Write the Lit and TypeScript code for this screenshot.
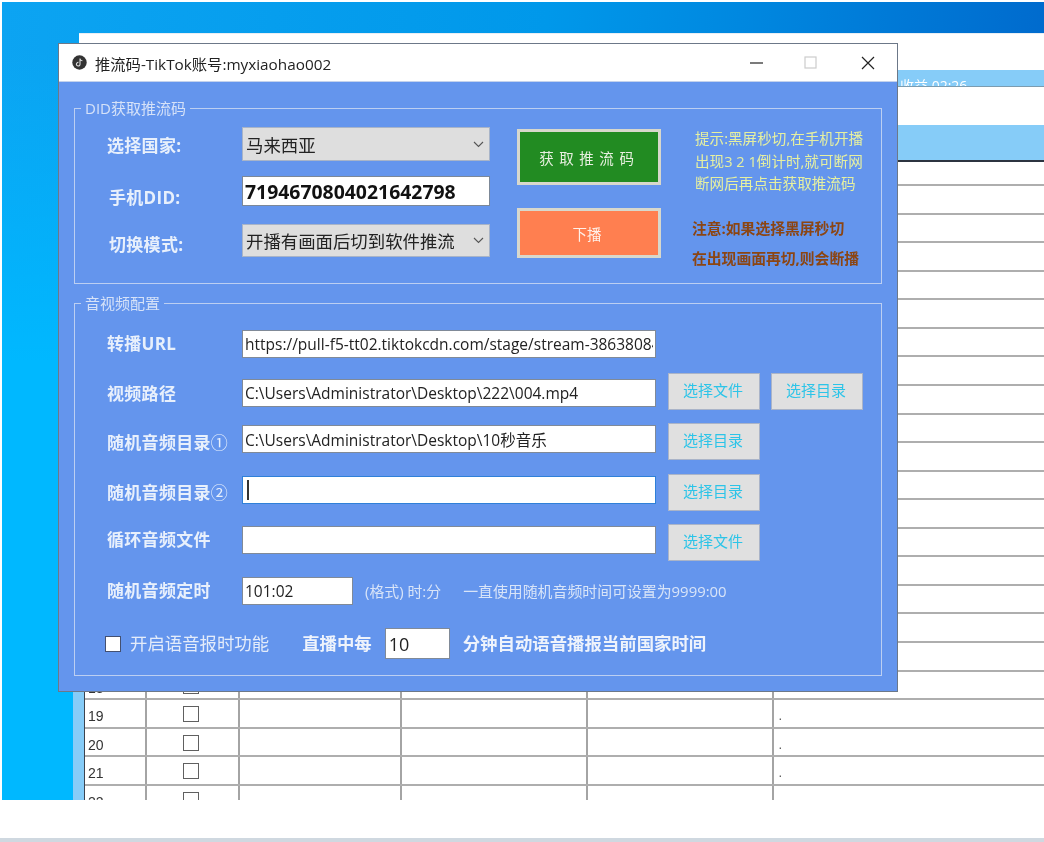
import { LitElement, html, css } from "lit";
import { customElement } from "lit/decorators.js";

const rowNumbers = Array.from({ length: 23 }, (_, i) => i + 1);

@customElement("app-root")
export class AppRoot extends LitElement {
  static styles = css`
    :host { display: block; width: 1044px; height: 842px; background: #fff; overflow: hidden; font-family: "Open Sans", "Noto Sans CJK SC", sans-serif; }
    .stage { height: 842px; display: flex; flex-direction: column; filter: blur(0.6px); background: #fff; padding-top: 2px; box-sizing: border-box; }
    .desktop { position: relative; margin-left: 2px; height: 798px; flex: none; overflow: hidden; background: linear-gradient(180deg, rgba(0,184,255,0) 6%, #00b8ff 45%) 0 0 / 90px 100% no-repeat, linear-gradient(97deg, #0ca4f2 0%, #0098ea 48%, #0088e0 65%, #0062c8 100%); }
    .foot { margin-top: 38px; height: 4px; background: #cfd8e0; flex: none; }

    .backwin { position: absolute; left: 77px; top: 31px; right: 0; bottom: 0; background: #fff; border-top: 1px solid #e8eef4; display: flex; flex-direction: column; }
    .band1 { margin-top: 36px; height: 17px; background: #86ccf8; border-bottom: 1px solid #7c9cb0; overflow: hidden; padding-left: 821px; color: #fff; font-size: 14px; line-height: 31px; flex: none; box-sizing: border-box; }
    .band2 { margin-top: 38px; height: 35px; background: #86ccf8; border-bottom: 2px solid #2c3440; flex: none; box-sizing: content-box; }
    .rows { margin-left: 5px; border-left: 1.5px solid #3c4450; }
    .row { display: grid; grid-template-columns: 61.5px 93px 162px 186px 186px 1fr; height: 28.57px; box-sizing: border-box; border-bottom: 2px solid #aeaeae; }
    .row.first { height: 24px; }
    .cell { border-right: 2px solid #a4a4a4; box-sizing: border-box; position: relative; overflow: hidden; }
    .cell:last-child { border-right: none; }
    .num { padding: 7px 0 0 3px; font: 14px/18px "Liberation Sans", sans-serif; color: #333; }
    .chkcell { display: flex; justify-content: center; padding: 6px 2px 0 0; }
    .tick { width: 16px; height: 16px; border: 1.5px solid #606060; box-sizing: border-box; background: #fff; }
    .dot { padding: 6px 0 0 5px; font: 13px/20px "Liberation Sans", sans-serif; color: #555; }
    .strip { position: absolute; left: 71px; top: 41px; bottom: 0; width: 11px; background: #86ccf8; }

    .dialog { position: absolute; left: 56px; top: 41px; width: 840px; height: 649px; box-sizing: border-box; border: 1px solid #6c7888; background: #6495ed; display: flex; flex-direction: column; }
    .title { height: 37px; flex: none; background: #fff; display: flex; align-items: center; padding-left: 13px; color: #222; font-size: 15.3px; border-bottom: 1px solid #c4d2ec; box-sizing: content-box; }
    .title .ico { width: 15px; height: 15px; margin-right: 8px; flex: none; }
    .title .txt { flex: 1; }
    .wbtns { display: flex; align-items: center; }
    .wbtns svg { display: block; width: 14px; height: 14px; }
    .wbtns .min { margin-right: 40px; }
    .wbtns .max { margin-right: 43px; }
    .wbtns .cls { margin-right: 22px; }

    .body { padding: 17px 15px 0; display: flex; flex-direction: column; gap: 10px; }
    fieldset { margin: 0; padding: 0; border: 1px solid #bccff2; min-width: 0; }
    legend { margin-left: 6px; padding: 0 4px; font-size: 15px; line-height: 18px; color: #d6e2f8; }

    .g1 { height: 185px; box-sizing: border-box; display: flex; padding-top: 10px; }
    .g1 .left { width: 415px; flex: none; display: flex; flex-direction: column; }
    .g1 .line { display: flex; align-items: center; }
    .lab { font-size: 17px; font-weight: 700; color: #e8f0fc; letter-spacing: .3px; white-space: nowrap; }
    .g1 .lab { width: 167px; padding-left: 32px; box-sizing: border-box; }
    .g1 .l1 { height: 34px; }
    .g1 .l2 { height: 30px; margin-top: 15px; }
    .g1 .l2 .lab { padding: 10px 0 0 34px; }
    .g1 .l3 { height: 33px; margin-top: 18px; }
    .g1 .l3 .lab { padding: 6px 0 0 34px; }
    .combo { width: 248px; height: 100%; box-sizing: border-box; background: #dedede; border: 1px solid #a8b4c8; display: flex; align-items: center; justify-content: space-between; padding: 0 5px 0 3px; font-size: 17.4px; color: #222; white-space: nowrap; }
    .combo svg { width: 11px; height: 7px; flex: none; }
    .did { width: 248px; height: 100%; box-sizing: border-box; border: 1px solid #7c8898; background: #fff; padding: 0 2px; font: 700 19.4px "Open Sans", sans-serif; color: #111; }
    .actions { width: 144px; margin-left: 27px; padding-top: 2px; flex: none; display: flex; flex-direction: column; gap: 23px; }
    .act { border: 3px solid #d8d8cc; color: #e8f0e0; font-size: 14.5px; display: flex; align-items: center; justify-content: center; box-sizing: border-box; white-space: pre; padding-right: 4px; }
    .go { height: 56px; background: #228b22; letter-spacing: .9px; }
    .stop { height: 50px; background: #ff7f50; color: #fff0e8; }
    .notes { margin-left: 31px; flex: none; white-space: nowrap; }
    .hint { margin: 0 0 0 3px; font-size: 14.6px; line-height: 22.5px; color: #e6f0a0; }
    .warn { margin: 18px 0 0; font-size: 14.8px; font-weight: 700; line-height: 30px; color: #8b4513; }

    .g2 { height: 382px; box-sizing: border-box; padding-top: 18px; display: grid; grid-template-rows: 43px 50px 51px 50px 53px 51px auto; }
    .r { display: flex; align-items: flex-start; --lo: 0px; --io: 0px; }
    .r2 { --lo: 7px; --io: 6px; }
    .r3 { --lo: 6px; --io: 2px; }
    .r4 { --lo: 5px; --io: 2px; }
    .r5 { --lo: 2px; --io: 2px; }
    .r6 { --lo: 0px; --io: 0px; }
    .g2 .lab { width: 167px; flex: none; padding: var(--lo) 0 0 32px; box-sizing: border-box; line-height: 28px; }
    .g2 .lab small { font-size: 17px; font-weight: 400; letter-spacing: 0; }
    input, .caretbox { box-sizing: border-box; border: 1px solid #808a98; background: #fff; font: 15.5px "Open Sans", "Noto Sans CJK SC", sans-serif; color: #222; padding: 0 2px; outline: none; margin: 0; }
    .wide { width: 414px; height: 28px; margin-top: var(--io); flex: none; }
    .caretbox { border-color: #2f80d8; display: flex; align-items: center; }
    .caret { width: 1.5px; height: 19px; background: #333; margin-left: 2px; border-bottom: 1px solid #333; }
    .pick { width: 92px; height: 37px; margin-left: 12px; padding-bottom: 4px; flex: none; box-sizing: border-box; background: #e0e0e0; border: 1px solid #aab4c8; color: #2cc4e8; font-size: 15px; display: flex; align-items: center; justify-content: center; }
    .pick span { margin-right: 2px; }
    .pick + .pick { margin-left: 11px; }
    .short { width: 111px; height: 28px; flex: none; }
    .note { font-size: 14.9px; color: #d8e4f8; line-height: 28px; white-space: nowrap; }
    .n1 { margin-left: 12px; }
    .n2 { margin-left: 22px; }
    .speak { display: flex; align-items: flex-start; padding-left: 30px; }
    .box { width: 16px; height: 16px; margin-top: 8px; box-sizing: border-box; border: 1.5px solid #445070; background: #fff; flex: none; }
    .speak span { font-size: 17.4px; line-height: 31px; color: #e4ecfa; white-space: nowrap; }
    .speak .on { margin-left: 9px; }
    .speak b { font-size: 17.4px; line-height: 31px; color: #eef3fc; white-space: nowrap; }
    .speak .b1 { margin-left: 33px; }
    .speak .b2 { margin-left: 13px; }
    .mins { width: 65px; height: 31px; margin-left: 13px; font-size: 18px; padding: 0 3px; flex: none; }
  `;

  private combo(text: string) {
    return html`<div class="combo"><span>${text}</span>
      <svg viewBox="0 0 11 7"><path d="M1 1l4.5 4.5L10 1" fill="none" stroke="#555" stroke-width="1.1"/></svg></div>`;
  }

  private backRow(n: number) {
    return html`<div class="row">
      <div class="cell num">${n}</div>
      <div class="cell chkcell"><div class="tick"></div></div>
      <div class="cell"></div><div class="cell"></div><div class="cell"></div>
      <div class="cell dot">.</div>
    </div>`;
  }

  render() {
    return html`<div class="stage">
      <div class="desktop">
        <div class="backwin">
          <div class="band1">收益 02:26</div>
          <div class="band2"></div>
          <div class="rows">
            <div class="row first"></div>
            ${rowNumbers.map((n) => this.backRow(n))}
          </div>
        </div>
        <div class="strip"></div>

        <div class="dialog">
          <div class="title">
            <svg class="ico" viewBox="0 0 15 15"><circle cx="7.5" cy="7.5" r="7.2" fill="#333"/><path d="M8 3.6v5.6a1.8 1.8 0 1 1-1.6-1.8M8 3.8c.4 1.2 1.2 1.9 2.4 2" fill="none" stroke="#ddd" stroke-width="1.1"/></svg>
            <span class="txt">推流码-TikTok账号:myxiaohao002</span>
            <div class="wbtns">
              <svg class="min" viewBox="0 0 14 14"><path d="M0 7h13" stroke="#222" stroke-width="1.2"/></svg>
              <svg class="max" viewBox="0 0 14 14"><rect x="1" y="1" width="11" height="11" fill="#fff" stroke="#ccc" stroke-width="1.2"/></svg>
              <svg class="cls" viewBox="0 0 14 14"><path d="M1 1l12 12M13 1L1 13" stroke="#222" stroke-width="1.2"/></svg>
            </div>
          </div>
          <div class="body">
            <fieldset class="g1">
              <legend>DID获取推流码</legend>
              <div class="left">
                <div class="line l1"><span class="lab">选择国家:</span>${this.combo("马来西亚")}</div>
                <div class="line l2"><span class="lab">手机DID:</span><input class="did" readonly value="7194670804021642798" /></div>
                <div class="line l3"><span class="lab">切换模式:</span>${this.combo("开播有画面后切到软件推流")}</div>
              </div>
              <div class="actions">
                <div class="act go">获 取 推 流 码</div>
                <div class="act stop">下播</div>
              </div>
              <div class="notes">
                <p class="hint">提示:黑屏秒切,在手机开播<br />出现3 2 1倒计时,就可断网<br />断网后再点击获取推流码</p>
                <p class="warn">注意:如果选择黑屏秒切<br />在出现画面再切,则会断播</p>
              </div>
            </fieldset>
            <fieldset class="g2">
              <legend>音视频配置</legend>
              <div class="r r1"><span class="lab">转播URL</span><input class="wide" readonly value="https://pull-f5-tt02.tiktokcdn.com/stage/stream-38638084" /></div>
              <div class="r r2"><span class="lab">视频路径</span><input class="wide" readonly value="C:\\Users\\Administrator\\Desktop\\222\\004.mp4" /><div class="pick"><span>选择文件</span></div><div class="pick"><span>选择目录</span></div></div>
              <div class="r r3"><span class="lab">随机音频目录<small>①</small></span><input class="wide" readonly value="C:\\Users\\Administrator\\Desktop\\10秒音乐" /><div class="pick"><span>选择目录</span></div></div>
              <div class="r r4"><span class="lab">随机音频目录<small>②</small></span><div class="wide caretbox"><div class="caret"></div></div><div class="pick"><span>选择目录</span></div></div>
              <div class="r r5"><span class="lab">循环音频文件</span><input class="wide" readonly value="" /><div class="pick"><span>选择文件</span></div></div>
              <div class="r r6"><span class="lab">随机音频定时</span><input class="short" readonly value="101:02" /><span class="note n1">(格式) 时:分</span><span class="note n2">一直使用随机音频时间可设置为9999:00</span></div>
              <div class="speak">
                <div class="box"></div><span class="on">开启语音报时功能</span>
                <b class="b1">直播中每</b><input class="mins" readonly value="10" /><b class="b2">分钟自动语音播报当前国家时间</b>
              </div>
            </fieldset>
          </div>
        </div>
      </div>
      <div class="foot"></div>
    </div>`;
  }
}
